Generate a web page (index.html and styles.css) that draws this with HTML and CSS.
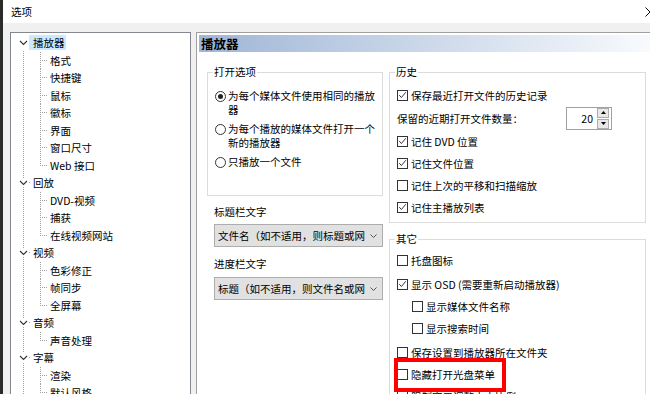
FILE: index.html
```html
<!DOCTYPE html>
<html>
<head>
  <title>选项</title>
  <meta charset="UTF-8">
  <link rel="stylesheet" href="styles.css">
</head>
<body>
  <div class="win">
    <div class="titlebar">
      <span>选项</span>
      <svg class="close" width="10" height="10" viewBox="0 0 10 10"><path d="M0.5 0.5L9.5 9.5M9.5 0.5L0.5 9.5"/></svg>
    </div>

    <div class="main">
      <!-- category tree -->
      <div class="tree">
        <div class="root"><svg class="chev" viewBox="0 0 9 9"><polyline points="1,3 4.5,6.5 8,3"/></svg><span class="lbl sel">播放器</span></div>
        <div class="kids">
          <div class="kid">格式</div>
          <div class="kid">快捷键</div>
          <div class="kid">鼠标</div>
          <div class="kid">徽标</div>
          <div class="kid">界面</div>
          <div class="kid">窗口尺寸</div>
          <div class="kid last">Web 接口</div>
        </div>
        <div class="root"><svg class="chev" viewBox="0 0 9 9"><polyline points="1,3 4.5,6.5 8,3"/></svg><span class="lbl">回放</span></div>
        <div class="kids">
          <div class="kid">DVD-视频</div>
          <div class="kid">捕获</div>
          <div class="kid last">在线视频网站</div>
        </div>
        <div class="root"><svg class="chev" viewBox="0 0 9 9"><polyline points="1,3 4.5,6.5 8,3"/></svg><span class="lbl">视频</span></div>
        <div class="kids">
          <div class="kid">色彩修正</div>
          <div class="kid">帧同步</div>
          <div class="kid last">全屏幕</div>
        </div>
        <div class="root"><svg class="chev" viewBox="0 0 9 9"><polyline points="1,3 4.5,6.5 8,3"/></svg><span class="lbl">音频</span></div>
        <div class="kids">
          <div class="kid last">声音处理</div>
        </div>
        <div class="root"><svg class="chev" viewBox="0 0 9 9"><polyline points="1,3 4.5,6.5 8,3"/></svg><span class="lbl">字幕</span></div>
        <div class="kids">
          <div class="kid">渲染</div>
          <div class="kid">默认风格</div>
          <div class="kid last">杂项</div>
        </div>
      </div>

      <!-- settings page -->
      <div class="page">
        <div class="page-head">播放器</div>

        <div class="cols">
          <div class="left">
            <fieldset class="grp open-grp">
              <legend>打开选项</legend>
              <div class="radio-row"><span class="rb on"></span><span class="rtext">为每个媒体文件使用相同的播放器</span></div>
              <div class="radio-row"><span class="rb"></span><span class="rtext">为每个播放的媒体文件打开一个新的播放器</span></div>
              <div class="radio-row"><span class="rb"></span><span class="rtext">只播放一个文件</span></div>
            </fieldset>

            <div class="field-label">标题栏文字</div>
            <div class="combo"><span class="ctext">文件名（如不适用，则标题或网址）</span><svg class="cdrop" viewBox="0 0 7 4"><polyline points="0.5,0.5 3.5,3.5 6.5,0.5"/></svg></div>

            <div class="field-label second">进度栏文字</div>
            <div class="combo second"><span class="ctext">标题（如不适用，则文件名或网址）</span><svg class="cdrop" viewBox="0 0 7 4"><polyline points="0.5,0.5 3.5,3.5 6.5,0.5"/></svg></div>
          </div>

          <div class="right">
            <fieldset class="grp hist-grp">
              <legend>历史</legend>
              <div class="row"><span class="cb on"><svg viewBox="0 0 11 11"><path d="M1.5 5l2.7 3 5.3-6.5"/></svg></span>保存最近打开文件的历史记录</div>
              <div class="row spin-row">
                <span class="grow">保留的近期打开文件数量：</span>
                <div class="spin">
                  <span class="val">20</span>
                  <div class="arrows">
                    <span class="arr"><svg viewBox="0 0 5 3"><polygon points="2.5,0 5,3 0,3"/></svg></span>
                    <span class="arr"><svg viewBox="0 0 5 3"><polygon points="0,0 5,0 2.5,3"/></svg></span>
                  </div>
                </div>
              </div>
              <div class="row"><span class="cb on"><svg viewBox="0 0 11 11"><path d="M1.5 5l2.7 3 5.3-6.5"/></svg></span>记住 DVD 位置</div>
              <div class="row"><span class="cb on"><svg viewBox="0 0 11 11"><path d="M1.5 5l2.7 3 5.3-6.5"/></svg></span>记住文件位置</div>
              <div class="row"><span class="cb"></span>记住上次的平移和扫描缩放</div>
              <div class="row"><span class="cb on"><svg viewBox="0 0 11 11"><path d="M1.5 5l2.7 3 5.3-6.5"/></svg></span>记住主播放列表</div>
            </fieldset>

            <fieldset class="grp other-grp">
              <legend>其它</legend>
              <div class="row"><span class="cb"></span>托盘图标</div>
              <div class="row gap"><span class="cb on"><svg viewBox="0 0 11 11"><path d="M1.5 5l2.7 3 5.3-6.5"/></svg></span>显示 OSD (需要重新启动播放器)</div>
              <div class="row sub"><span class="cb"></span>显示媒体文件名称</div>
              <div class="row sub"><span class="cb"></span>显示搜索时间</div>
              <div class="row gap"><span class="cb"></span>保存设置到播放器所在文件夹</div>
              <div class="row marked"><span class="cb"></span>隐藏打开光盘菜单<span class="mark"></span></div>
              <div class="row"><span class="cb"></span>限制窗口调整大小比例</div>
            </fieldset>
          </div>
        </div>
      </div>
    </div>
  </div>
</body>
</html>
```

FILE: styles.css
```css
body {
  margin: 0;
  background: #f0f0f0;
  font-family: "Noto Sans CJK SC", "Noto Sans", sans-serif;
  font-size: 10.5px;
  color: #000;
}
.win {
  width: 650px;
  height: 394px;
  box-sizing: border-box;
  border-left: 3px solid #2b2b2b;
  background: #f0f0f0;
  overflow: hidden;
  display: flex;
  flex-direction: column;
}
.titlebar {
  height: 23px;
  flex: none;
  background: #fff;
  display: flex;
  align-items: center;
  justify-content: space-between;
  padding-left: 8px;
}
.close {
  margin-right: -5px;
  stroke: #111;
  stroke-width: 1;
  fill: none;
}
.main {
  flex: 1;
  min-height: 0;
  display: flex;
  gap: 5px;
  padding: 9px 0 0 7px;
}

/* Tree */
.tree {
  width: 181px;
  flex: none;
  box-sizing: border-box;
  background: #fff repeating-linear-gradient(to bottom, #a0a0a0 0 1px, transparent 1px 2px) 12px 18px / 1px 100% no-repeat;
  border: 1px solid #828790;
  border-bottom: none;
  padding-top: 1px;
}
.root {
  height: 17.5px;
  display: flex;
  align-items: center;
  padding-left: 8px;
  background: linear-gradient(#a0a0a0, #a0a0a0) 18px 50% / 1px 1px no-repeat;
}
.chev {
  width: 9px;
  height: 9px;
  flex: none;
  background: #fff;
  margin-right: 1px;
  fill: none;
  stroke: #333;
  stroke-width: 1.1;
}
.lbl {
  padding: 0 1px 0 4px;
  line-height: 15px;
}
.lbl.sel {
  background: #cce8ff;
}
.kid {
  height: 17.5px;
  line-height: 17.5px;
  padding-left: 39px;
  white-space: nowrap;
  background:
    repeating-linear-gradient(to bottom, #a0a0a0 0 1px, transparent 1px 2px) 29px 0 / 1px 100% no-repeat,
    repeating-linear-gradient(to right, #a0a0a0 0 1px, transparent 1px 2px) 29px 50% / 8px 1px no-repeat;
}
.kid.last {
  background:
    repeating-linear-gradient(to bottom, #a0a0a0 0 1px, transparent 1px 2px) 29px 0 / 1px 50% no-repeat,
    repeating-linear-gradient(to right, #a0a0a0 0 1px, transparent 1px 2px) 29px 50% / 8px 1px no-repeat;
}

/* Page */
.page {
  flex: 1;
  background: #fff;
  border: 1px solid #a0a0a0;
  border-right: none;
  border-bottom: none;
}
.page-head {
  margin: 2px 0 0 2px;
  height: 17px;
  line-height: 17px;
  padding-left: 2px;
  font-size: 12.5px;
  font-weight: bold;
  background: linear-gradient(to right, #9fb6d6, #f8fafd);
}
.cols {
  display: flex;
  gap: 6px;
  margin: 13px 0 0 10px;
  align-items: flex-start;
}
.left {
  width: 176px;
  flex: none;
}
.right {
  width: 257px;
  flex: none;
}
.grp {
  margin: 0;
  min-width: 0;
  border: 1px solid #dcdcdc;
  padding: 0 0 0 7px;
}
.grp legend {
  margin-left: -2px;
  padding: 0 1px;
  line-height: 14px;
}

/* Open options */
.open-grp {
  padding-top: 10px;
  padding-bottom: 26px;
}
.radio-row {
  display: flex;
  align-items: flex-start;
  gap: 2px;
  line-height: 14px;
  margin-bottom: 5px;
}
.radio-row:last-child {
  margin-bottom: 0;
}
.rtext {
  width: 150px;
}
.rb {
  width: 11px;
  height: 11px;
  box-sizing: border-box;
  flex: none;
  margin-top: 1.5px;
  border: 1px solid #333;
  border-radius: 50%;
  background: #fff;
  display: flex;
  align-items: center;
  justify-content: center;
}
.rb.on::after {
  content: "";
  width: 5px;
  height: 5px;
  border-radius: 50%;
  background: #222;
}
.field-label {
  margin: 9px 0 0 7px;
  line-height: 14px;
}
.field-label.second {
  margin-top: 10px;
}
.combo {
  margin: 5px 0 0 7px;
  width: 169px;
  height: 23px;
  box-sizing: border-box;
  border: 1px solid #adadad;
  background: #e1e1e1;
  display: flex;
  align-items: center;
  padding-left: 3px;
}
.combo.second {
  margin-top: 6px;
}
.ctext {
  width: 147px;
  overflow: hidden;
  white-space: nowrap;
}
.cdrop {
  width: 7px;
  height: 4px;
  margin-left: auto;
  margin-right: 5px;
  fill: none;
  stroke: #555;
  stroke-width: 1;
}

/* Checkbox rows */
.hist-grp {
  padding-top: 5px;
  padding-bottom: 4px;
}
.other-grp {
  margin-top: 9px;
  padding-top: 3px;
}
.row {
  height: 22px;
  display: flex;
  align-items: center;
  gap: 3px;
  white-space: nowrap;
}
.row.gap {
  margin-top: 2px;
}
.row.sub {
  padding-left: 15px;
}
.row.marked {
  position: relative;
}
.mark {
  position: absolute;
  left: -3px;
  top: -5px;
  width: 112px;
  height: 34px;
  box-sizing: border-box;
  border: 4px solid #f00;
}
.cb {
  width: 11px;
  height: 11px;
  box-sizing: border-box;
  flex: none;
  border: 1px solid #333;
  background: #fff;
  display: flex;
}
.cb svg {
  width: 9px;
  height: 9px;
  fill: none;
  stroke: #222;
  stroke-width: 1.1;
}
.spin-row {
  height: 24px;
}
.grow {
  flex: 1;
}
.spin {
  width: 46px;
  height: 23px;
  box-sizing: border-box;
  margin-right: 33px;
  border: 1px solid #a0a0a0;
  display: flex;
  align-items: center;
}
.val {
  flex: 1;
  text-align: right;
  padding-right: 4px;
}
.arrows {
  width: 12px;
  margin-right: 2px;
  display: flex;
  flex-direction: column;
  gap: 1px;
}
.arr {
  height: 10px;
  box-sizing: border-box;
  border: 1px solid #adadad;
  background: #e8e8e8;
  display: flex;
  align-items: center;
  justify-content: center;
}
.arr svg {
  width: 5px;
  height: 3px;
  fill: #000;
}
```
